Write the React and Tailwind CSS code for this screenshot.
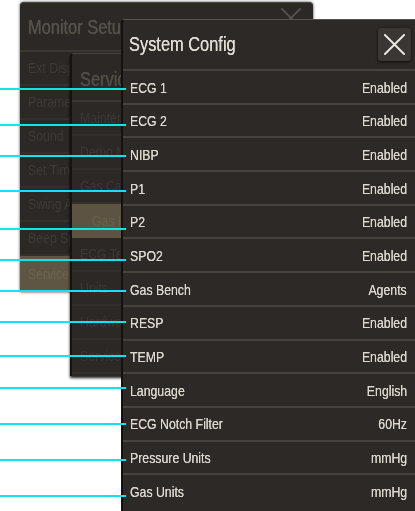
const font = { fontFamily: '"Liberation Sans", Arial, sans-serif' };

const setupRows = ['Ext Display', 'Parameters', 'Sound', 'Set Time', 'Swing Arm', 'Beep Speed'];
const serviceRows = ['Maintenance', 'Demo Mode', 'Gas Cal', 'Gas Bench', 'ECG Test', 'Units', 'Hardware', 'Service Log'];
const configRows = [
  ['ECG 1', 'Enabled'],
  ['ECG 2', 'Enabled'],
  ['NIBP', 'Enabled'],
  ['P1', 'Enabled'],
  ['P2', 'Enabled'],
  ['SPO2', 'Enabled'],
  ['Gas Bench', 'Agents'],
  ['RESP', 'Enabled'],
  ['TEMP', 'Enabled'],
  ['Language', 'English'],
  ['ECG Notch Filter', '60Hz'],
  ['Pressure Units', 'mmHg'],
  ['Gas Units', 'mmHg'],
];

// annotation leader lines, one per config row
const leaders = [88, 124, 155, 190, 228, 259, 290, 321, 355, 387, 423, 459, 495];

function CloseIcon({ className }) {
  return (
    <svg viewBox="0 0 22 22" className={className} fill="none" stroke="currentColor" strokeWidth="2" strokeLinecap="round">
      <path d="M1 1 L21 21 M21 1 L1 21" />
    </svg>
  );
}

// narrow face: squeeze Liberation Sans like Arial Narrow
function Narrow({ children, right }) {
  return (
    <span className={right ? 'inline-block whitespace-nowrap scale-x-[0.82] origin-right' : 'inline-block whitespace-nowrap scale-x-[0.82] origin-left'}>
      {children}
    </span>
  );
}

export default function App() {
  return (
    <div className="relative w-[415px] h-[511px] bg-white overflow-hidden" style={font}>
      {/* Monitor Setup window (back) */}
      <div className="absolute left-[20px] top-[2px] w-[293px] h-[290px] bg-[#2b2825] border-t border-[#4a4641] rounded-t-sm flex flex-col shadow-[0_0_3px_rgba(0,0,0,0.8)]">
        <div className="h-[49px] flex items-start justify-between pl-2 pr-3 pt-[9px] border-b-2 border-[#3b3733]">
          <div className="w-[92px] overflow-hidden">
            <Narrow><span className="text-[20px] text-[#56524c] [text-shadow:0_0_1px_#56524c]">Monitor Setup</span></Narrow>
          </div>
          <CloseIcon className="w-5 h-5 text-[#57534d] -mt-1" />
        </div>
        {setupRows.map((r) => (
          <div key={r} className="h-[34px] flex items-center pl-2 text-[15px] text-[#3e3a36] border-b-2 border-[#34302c]">
            <div className="w-[42px] overflow-hidden blur-[0.5px]"><Narrow>{r}</Narrow></div>
          </div>
        ))}
        <div className="flex-1 flex items-center pl-2 text-[15px] text-[#6e634e] bg-[#5e5543]">
          <div className="w-[42px] overflow-hidden blur-[0.5px]"><Narrow>Service</Narrow></div>
        </div>
      </div>

      {/* Service window (middle) */}
      <div className="absolute left-[70px] top-[53px] w-[290px] h-[323px] bg-[#2b2825] border-t border-[#4a4641] border-l-2 border-l-[#151311] rounded-t-sm flex flex-col shadow-[0_2px_3px_rgba(0,0,0,0.9)]">
        <div className="h-[48px] flex items-center pl-2 pt-1 border-b-2 border-[#3b3733]">
          <div className="w-[42px] overflow-hidden">
            <Narrow><span className="text-[20px] text-[#524e48] [text-shadow:0_0_1px_#524e48]">Service</span></Narrow>
          </div>
        </div>
        {serviceRows.map((r, i) => (
          <div
            key={r}
            className={
              i === 3
                ? 'h-[34px] flex items-center pl-5 text-[15px] text-[#6c614c] bg-[#5c5342]'
                : 'h-[34px] flex items-center pl-2 text-[15px] text-[#3c3834] border-b-2 border-[#34302c]'
            }
          >
            <div className={i === 3 ? 'w-[28px] overflow-hidden blur-[0.5px]' : 'w-[40px] overflow-hidden blur-[0.5px]'}><Narrow>{r}</Narrow></div>
          </div>
        ))}
      </div>

      {/* System Config window (front) */}
      <div className="absolute left-[121px] top-[19px] w-[294px] h-[492px] bg-[#2c2926] border-t border-[#56524c] border-l-2 border-l-[#141210] rounded-tl-sm flex flex-col">
        <div className="h-[49px] flex items-center justify-between pl-[6px] pr-[4px] shrink-0">
          <span className="text-[20px] text-[#e2ded7] -mt-[2px] [text-shadow:0_0_0.6px_#e2ded7]"><Narrow>System Config</Narrow></span>
          <div className="w-[33px] h-[33px] rounded-[3px] bg-[#3a3633] shadow-[0_1px_3px_rgba(0,0,0,0.7)] flex items-center justify-center">
            <CloseIcon className="w-[21px] h-[21px] text-[#ece8e2]" />
          </div>
        </div>
        {configRows.map(([label, value]) => (
          <div
            key={label}
            className="h-[33.7px] shrink-0 flex items-center justify-between pl-[7px] pr-[8px] pt-[2px] border-t-2 border-[#46423d] text-[15px] text-[#dcd8d0] [text-shadow:0_0_0.6px_#dcd8d0]"
          >
            <Narrow>{label}</Narrow>
            <Narrow right>{value}</Narrow>
          </div>
        ))}
      </div>

      {/* cyan annotation lines */}
      {leaders.map((y) => (
        <div key={y} className="absolute left-0 w-[126px] h-[1.5px] bg-[#12e3ee]" style={{ top: y }} />
      ))}
    </div>
  );
}
